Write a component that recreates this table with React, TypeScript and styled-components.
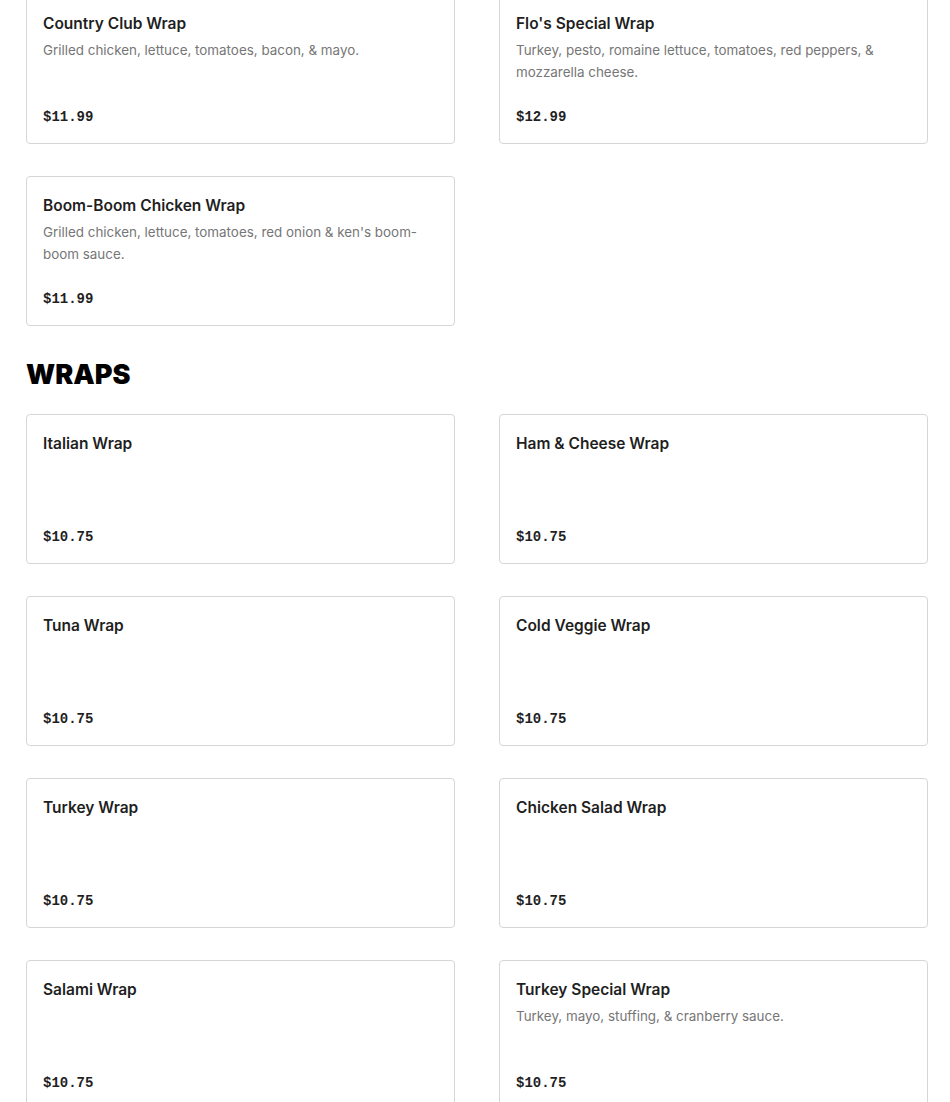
import React from "react"
import styled, { createGlobalStyle } from "styled-components"

const GlobalStyle = createGlobalStyle`
  html, body {
    margin: 0;
    padding: 0;
    background: #fff;
  }
  body {
    font-family: Inter, "Noto Sans", sans-serif;
    color: #191919;
    overflow: hidden;
  }
`

const Page = styled.div`
  padding: 0 22px 0 26px;
  margin-top: -6px;
`

const Section = styled.section`
  & + & {
    margin-top: 33px;
  }
`

const SectionTitle = styled.h2`
  margin: 0 0 23px;
  font-family: Inter, "Liberation Sans", sans-serif;
  font-weight: 900;
  font-size: 27px;
  line-height: 32px;
  color: #000;
`

const Grid = styled.div`
  display: grid;
  grid-template-columns: 1fr 1fr;
  column-gap: 44px;
  row-gap: 32px;
`

const Card = styled.div`
  box-sizing: border-box;
  height: 150px;
  padding: 17px 16px 16px;
  border: 1px solid #d6d6d6;
  border-radius: 4px;
  display: flex;
  flex-direction: column;
  background: #fff;
`

const Title = styled.h3`
  margin: 0;
  font-size: 15.5px;
  line-height: 24px;
  font-weight: 600;
  color: #1f1f1f;
`

const Desc = styled.p`
  margin: 3px 0 0;
  font-size: 13.4px;
  line-height: 22px;
  color: #767676;
  padding-right: 20px;
`

const Price = styled.div`
  margin-top: auto;
  font-family: "Liberation Mono", "DejaVu Sans Mono", monospace;
  font-weight: 700;
  font-size: 14px;
  line-height: 20px;
  color: #1f1f1f;
`

type Item = { name: string; desc?: string; price: string }

const specials: Item[] = [
  { name: "Country Club Wrap", desc: "Grilled chicken, lettuce, tomatoes, bacon, & mayo.", price: "$11.99" },
  { name: "Flo's Special Wrap", desc: "Turkey, pesto, romaine lettuce, tomatoes, red peppers, & mozzarella cheese.", price: "$12.99" },
  { name: "Boom-Boom Chicken Wrap", desc: "Grilled chicken, lettuce, tomatoes, red onion & ken's boom-boom sauce.", price: "$11.99" },
]

const wraps: Item[] = [
  { name: "Italian Wrap", price: "$10.75" },
  { name: "Ham & Cheese Wrap", price: "$10.75" },
  { name: "Tuna Wrap", price: "$10.75" },
  { name: "Cold Veggie Wrap", price: "$10.75" },
  { name: "Turkey Wrap", price: "$10.75" },
  { name: "Chicken Salad Wrap", price: "$10.75" },
  { name: "Salami Wrap", price: "$10.75" },
  { name: "Turkey Special Wrap", desc: "Turkey, mayo, stuffing, & cranberry sauce.", price: "$10.75" },
]

const MenuCard = ({ item }: { item: Item }) => (
  <Card>
    <Title>{item.name}</Title>
    {item.desc && <Desc>{item.desc}</Desc>}
    <Price>{item.price}</Price>
  </Card>
)

const App = () => {
  return (
    <>
      <GlobalStyle />
      <Page>
        <Section>
          <Grid>
            {specials.map((item, i) => <MenuCard key={i} item={item} />)}
          </Grid>
        </Section>
        <Section>
          <SectionTitle>WRAPS</SectionTitle>
          <Grid>
            {wraps.map((item, i) => <MenuCard key={i} item={item} />)}
          </Grid>
        </Section>
      </Page>
    </>
  )
}

export default App
